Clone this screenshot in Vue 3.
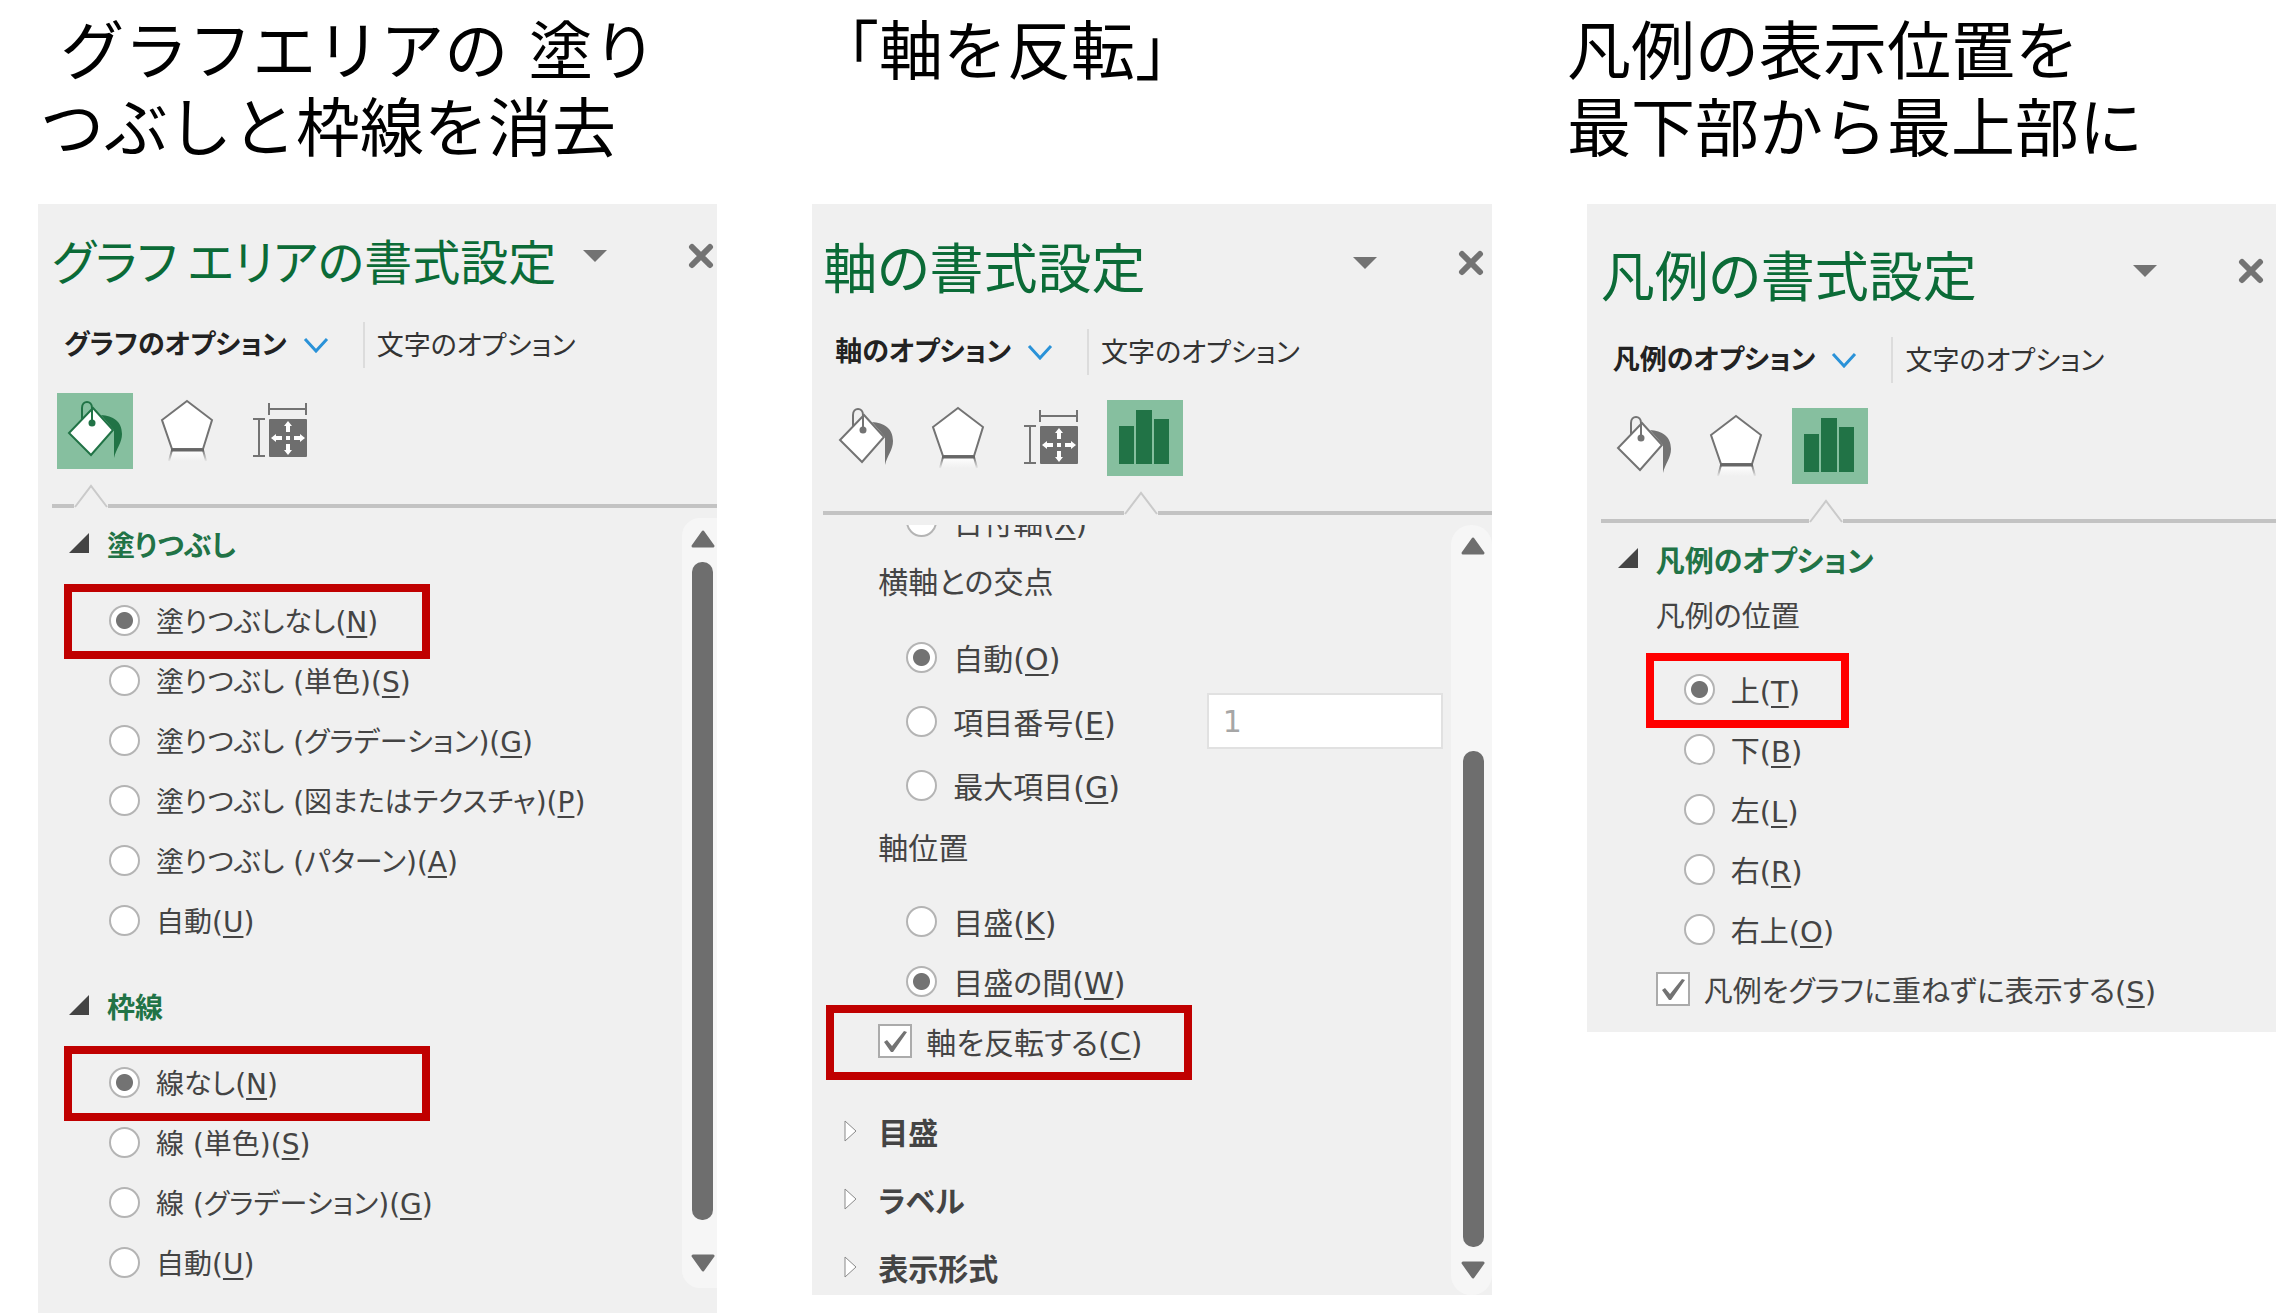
<template>
  <main class="page">
    <div class="captions">
      <p v-for="(caption, i) in captions" :key="i" class="caption">{{ caption }}</p>
    </div>

    <div class="panels">
      <section v-for="panel in panels" :key="panel.id" :class="['panel', `panel-${panel.id}`]">
        <header class="title-bar">
          <h2 class="title">{{ panel.title }}</h2>
          <div class="window-buttons">
            <button type="button" class="icon-button" aria-label="作業ウィンドウ オプション">
              <svg width="24" height="12" viewBox="0 0 24 12"><path d="M0 0H24L12 12Z" fill="#737373" /></svg>
            </button>
            <button type="button" class="icon-button" aria-label="閉じる">
              <svg width="26" height="26" viewBox="0 0 26 26">
                <path d="M4 4L22 22M22 4L4 22" stroke="#737373" stroke-width="6" stroke-linecap="round" />
              </svg>
            </button>
          </div>
        </header>

        <nav class="tabs">
          <button type="button" class="tab tab-current">
            {{ panel.tab }}
            <svg width="26" height="16" viewBox="0 0 26 16">
              <path d="M2 2L13 14L24 2" fill="none" stroke="#2a92d8" stroke-width="3" />
            </svg>
          </button>
          <button type="button" class="tab">文字のオプション</button>
        </nav>

        <div class="tiles">
          <button
            v-for="(icon, index) in panel.icons"
            :key="icon"
            type="button"
            :class="['tile', { active: index === panel.activeIcon }]"
            :aria-label="iconNames[icon]"
          >
            <svg v-if="icon === 'fill'" width="76" height="76" viewBox="0 0 76 76">
              <path d="M44 22C56 23 65 28 65 41C65 50 59 56 57 65V37Z" fill="currentColor" />
              <path d="M36 15L56 37L34 62L12 40Z" fill="#fff" stroke="currentColor" stroke-width="2" />
              <path d="M25 27V15C25 7 35 7 35 15V29" fill="none" stroke="currentColor" stroke-width="2" />
              <circle cx="35" cy="30" r="3.5" fill="currentColor" />
            </svg>
            <svg v-else-if="icon === 'effect'" width="76" height="76" viewBox="0 0 76 76">
              <defs>
                <linearGradient :id="`fade-${panel.id}`" x1="0" y1="0" x2="0" y2="1">
                  <stop offset="0" stop-color="#fff" />
                  <stop offset="1" stop-color="#f0f0f0" />
                </linearGradient>
                <linearGradient :id="`leg-${panel.id}`" gradientUnits="userSpaceOnUse" x1="0" y1="57" x2="0" y2="69">
                  <stop offset="0" stop-color="#737373" />
                  <stop offset="1" stop-color="#f0f0f0" />
                </linearGradient>
              </defs>
              <path d="M22 57H53L56 68H19Z" :fill="`url(#fade-${panel.id})`" />
              <path d="M22 57L19 68M53 57L56 68" :stroke="`url(#leg-${panel.id})`" stroke-width="2" />
              <path d="M37 8L62 27L53 56H22L12 27Z" fill="#fff" stroke="#737373" stroke-width="2" />
              <path d="M21 57H54" stroke="#666" stroke-width="3" />
            </svg>
            <svg v-else-if="icon === 'size'" width="76" height="76" viewBox="0 0 76 76">
              <path
                d="M26 16H63M26 10V22M63 10V22M16 26V63M10 26H22M10 63H22"
                stroke="#737373"
                stroke-width="2"
                fill="none"
              />
              <rect x="26" y="26" width="38" height="38" rx="1" fill="#6e6e6e" />
              <path
                d="M45 33V39M45 51V57M33 45H39M51 45H57"
                stroke="#fff"
                stroke-width="4"
              />
              <path
                d="M45 28L49 33H41ZM45 62L41 57H49ZM28 45L33 41V49ZM62 45L57 49V41ZM43 43H47V47H43Z"
                fill="#fff"
              />
            </svg>
            <svg v-else width="76" height="76" viewBox="0 0 76 76">
              <path d="M12 26H27V64H12ZM29 10H45V64H29ZM47 19H62V64H47Z" fill="currentColor" />
            </svg>
          </button>
        </div>

        <div class="pointer-line">
          <span class="line-start" :style="{ width: `${22 + panel.activeIcon * 93}px` }"></span>
          <svg width="34" height="24" viewBox="0 0 34 24">
            <path d="M1 23L17 2L33 23" fill="none" stroke="#cacaca" stroke-width="2" />
          </svg>
          <span class="line-end"></span>
        </div>

        <div class="body">
          <div class="options">
            <template v-for="(row, r) in panel.rows" :key="r">
              <h3 v-if="row.type === 'heading'" :class="['heading', { closed: row.closed }]">
                <button type="button" class="heading-button" :aria-expanded="!row.closed">
                  <svg v-if="row.closed" class="marker" width="20" height="24" viewBox="0 0 20 24">
                    <path d="M5 2L16 12L5 22Z" fill="#fff" stroke="#8a8a8a" stroke-width="1" />
                  </svg>
                  <svg v-else class="marker" width="20" height="24" viewBox="0 0 20 24">
                    <path d="M0 21L20 1V21Z" fill="#444" />
                  </svg>
                  {{ row.text }}
                </button>
              </h3>
              <p v-else-if="row.type === 'label'" class="label">{{ row.text }}</p>
              <div v-else :class="['row', row.type, { tall: row.tall, nested: panel.nested }]">
                <span class="control">
                  <input
                    v-if="row.type === 'radio'"
                    :id="`${panel.id}-${r}`"
                    v-model="selected[row.group]"
                    class="radio-input"
                    type="radio"
                    :name="row.group"
                    :value="row.key"
                  >
                  <template v-else>
                    <input :id="`${panel.id}-${r}`" v-model="checked[panel.id]" class="check-input" type="checkbox">
                    <svg v-if="checked[panel.id]" class="check-mark" width="34" height="34" viewBox="0 0 34 34">
                      <path d="M6 18L9 16L14 22L26 7L29 8L15 28H13Z" fill="#737373" />
                    </svg>
                  </template>
                </span>
                <label :for="`${panel.id}-${r}`">{{ row.text }}(<u>{{ row.key }}</u>)</label>
                <input
                  v-if="row.input"
                  v-model="itemNumber"
                  class="number-input"
                  type="text"
                  aria-label="項目番号"
                  disabled
                >
                <span v-if="row.mark" :class="['mark', row.mark]"></span>
              </div>
            </template>
          </div>

          <div v-if="panel.scrollbar" class="scrollbar">
            <button type="button" class="scroll-button" aria-label="上へスクロール">
              <svg width="24" height="18" viewBox="0 0 24 18">
                <path d="M12 2L22 16H2Z" fill="#6e6e6e" stroke="#6e6e6e" stroke-width="3" stroke-linejoin="round" />
              </svg>
            </button>
            <div class="scroll-track"><div class="scroll-thumb"></div></div>
            <button type="button" class="scroll-button" aria-label="下へスクロール">
              <svg width="24" height="18" viewBox="0 0 24 18">
                <path d="M12 16L22 2H2Z" fill="#6e6e6e" stroke="#6e6e6e" stroke-width="3" stroke-linejoin="round" />
              </svg>
            </button>
          </div>
        </div>
      </section>
    </div>
  </main>
</template>

<script setup>
import { reactive, ref } from 'vue'

const captions = [
  ' グラフエリアの 塗り\nつぶしと枠線を消去',
  '「軸を反転」',
  '凡例の表示位置を\n最下部から最上部に'
]

const iconNames = {
  fill: '塗りつぶしと線',
  effect: '効果',
  size: 'サイズとプロパティ',
  chart: 'オプション'
}

const radio = (group, text, key, extra = {}) => ({ type: 'radio', group, text, key, ...extra })

const panels = [
  {
    id: 'area',
    title: 'グラフ エリアの書式設定',
    tab: 'グラフのオプション',
    icons: ['fill', 'effect', 'size'],
    activeIcon: 0,
    scrollbar: true,
    rows: [
      { type: 'heading', text: '塗りつぶし' },
      radio('fill', '塗りつぶしなし', 'N', { mark: 'wide' }),
      radio('fill', '塗りつぶし (単色)', 'S'),
      radio('fill', '塗りつぶし (グラデーション)', 'G'),
      radio('fill', '塗りつぶし (図またはテクスチャ)', 'P'),
      radio('fill', '塗りつぶし (パターン)', 'A'),
      radio('fill', '自動', 'U'),
      { type: 'heading', text: '枠線' },
      radio('border', '線なし', 'N', { mark: 'wide' }),
      radio('border', '線 (単色)', 'S'),
      radio('border', '線 (グラデーション)', 'G'),
      radio('border', '自動', 'U')
    ]
  },
  {
    id: 'axis',
    title: '軸の書式設定',
    tab: '軸のオプション',
    icons: ['fill', 'effect', 'size', 'chart'],
    activeIcon: 3,
    scrollbar: true,
    nested: true,
    rows: [
      radio('axisType', '日付軸', 'X'),
      { type: 'label', text: '横軸との交点' },
      radio('cross', '自動', 'O', { tall: true }),
      radio('cross', '項目番号', 'E', { tall: true, input: true }),
      radio('cross', '最大項目', 'G', { tall: true }),
      { type: 'label', text: '軸位置' },
      radio('position', '目盛', 'K'),
      radio('position', '目盛の間', 'W'),
      { type: 'check', text: '軸を反転する', key: 'C', mark: 'wide' },
      { type: 'heading', text: '目盛', closed: true },
      { type: 'heading', text: 'ラベル', closed: true },
      { type: 'heading', text: '表示形式', closed: true }
    ]
  },
  {
    id: 'legend',
    title: '凡例の書式設定',
    tab: '凡例のオプション',
    icons: ['fill', 'effect', 'chart'],
    activeIcon: 2,
    nested: true,
    rows: [
      { type: 'heading', text: '凡例のオプション' },
      { type: 'label', text: '凡例の位置' },
      radio('legend', '上', 'T', { mark: 'narrow' }),
      radio('legend', '下', 'B'),
      radio('legend', '左', 'L'),
      radio('legend', '右', 'R'),
      radio('legend', '右上', 'O'),
      { type: 'check', text: '凡例をグラフに重ねずに表示する', key: 'S' }
    ]
  }
]

const selected = reactive({
  fill: 'N',
  border: 'N',
  axisType: '',
  cross: 'O',
  position: 'W',
  legend: 'T'
})
const checked = reactive({ axis: true, legend: true })
const itemNumber = ref('1')
</script>

<style>
body {
  margin: 0;
  background: #fff;
}
</style>

<style scoped>
* {
  box-sizing: border-box;
}

.page {
  font-family: "DejaVu Sans", "Noto Sans CJK JP", sans-serif;
  font-size: 30px;
  color: #444;
  overflow: hidden;
}

.captions {
  display: grid;
  grid-template-columns: 775fr 752fr 709fr;
  height: 204px;
  padding: 14px 0 0 40px;
}

.caption {
  margin: 0;
  font-size: 64px;
  line-height: 77px;
  color: #000;
  white-space: pre;
}

.panels {
  display: grid;
  grid-template-columns: 68fr 68fr 69fr;
  gap: 95px;
  align-items: start;
  padding-left: 38px;
}

.panel {
  min-width: 0;
  padding-left: 14px;
  background: #f0f0f0;
  font-feature-settings: "palt";
}

.panel-area {
  padding-top: 27px;
  padding-bottom: 25px;
}

.panel-axis {
  padding-top: 34px;
  padding-left: 11px;
}

.panel-legend {
  padding-top: 42px;
  padding-bottom: 13px;
}

button {
  padding: 0;
  border: none;
  background: none;
  font: inherit;
  font-feature-settings: inherit;
  color: inherit;
  cursor: pointer;
}

svg {
  display: block;
}

/* タイトル */
.title-bar {
  display: flex;
  justify-content: space-between;
  height: 60px;
  padding-right: 3px;
}

.panel-axis .title-bar {
  padding-right: 8px;
}

.panel-legend .title-bar {
  padding-right: 12px;
}

.title {
  min-width: 0;
  margin: 0;
  font-family: "Noto Sans CJK JP", sans-serif;
  font-size: 54px;
  font-weight: 400;
  line-height: 56px;
  color: #0b6b37;
  white-space: nowrap;
}

.panel-area .title {
  font-size: 48px;
}

.window-buttons {
  display: flex;
  flex: none;
  gap: 81px;
  align-items: center;
  height: 50px;
}

/* タブ */
.tabs {
  display: flex;
  height: 46px;
  margin-top: 31px;
  padding-left: 12px;
  font-size: 27px;
}

.tab {
  padding-left: 12px;
  color: #333;
  line-height: 48px;
  white-space: nowrap;
}

.tab-current {
  display: flex;
  gap: 16px;
  align-items: center;
  padding: 0 34px 0 0;
  border-right: 2px solid #dcdcdc;
  font-weight: 700;
  color: #222;
}

.tiles {
  display: flex;
  gap: 17px;
  margin-top: 25px;
  padding-left: 5px;
}

.tile {
  width: 76px;
  height: 76px;
  color: #737373;
}

.tile.active {
  background: #86bf9f;
  color: #217346;
}

.pointer-line {
  display: flex;
  align-items: flex-end;
  height: 24px;
  margin-top: 15px;
}

.line-start,
.line-end {
  height: 4px;
  background: #c3c3c3;
}

.line-end {
  flex: 1;
}

/* 本文 */
.body {
  display: flex;
  height: 770px;
  margin-top: 10px;
  overflow: hidden;
}

.panel-area .body {
  font-size: 28px;
}

.panel-legend .body {
  height: auto;
  font-size: 29px;
}

.options {
  flex: 1;
  min-width: 0;
}

.heading {
  margin: 0;
  font-size: inherit;
  font-weight: 700;
  color: #217346;
}

.heading-button {
  display: flex;
  gap: 18px;
  align-items: center;
  height: 52px;
  padding-left: 17px;
}

.row + .heading {
  margin-top: 30px;
}

.heading.closed {
  margin-top: 16px;
  color: #444;
}

.row + .heading.closed {
  margin-top: 34px;
}

.heading + .row {
  margin-top: 20px;
}

.label {
  height: 54px;
  margin: 4px 0 16px;
  padding-left: 55px;
  line-height: 56px;
}

.row {
  position: relative;
  display: flex;
  gap: 16px;
  align-items: center;
  height: 60px;
  padding-left: 57px;
  white-space: nowrap;
}

.row.nested {
  padding-left: 83px;
}

.row.tall {
  height: 64px;
}

.row.check {
  gap: 14px;
  padding-left: 55px;
}

.panel-axis .row:first-child {
  margin-top: -34px;
}

.row u {
  text-decoration-thickness: 2px;
  text-underline-offset: 4px;
}

.control {
  position: relative;
  display: flex;
  flex: none;
}

.radio-input {
  appearance: none;
  width: 31px;
  height: 31px;
  margin: 0;
  border: 2px solid #b4b4b4;
  border-radius: 50%;
  background: #fff;
}

.radio-input:checked {
  background: radial-gradient(circle, #737373 0 8px, #fff 9px);
}

.check-input {
  appearance: none;
  width: 34px;
  height: 34px;
  margin: 0;
  border: 2px solid #ababab;
  background: #fff;
}

.check-mark {
  position: absolute;
  inset: 0;
  pointer-events: none;
}

.number-input {
  width: 236px;
  height: 56px;
  margin-left: auto;
  margin-right: 8px;
  padding: 0 14px;
  border: 2px solid #e1e1e1;
  background: #fff;
  font: inherit;
  color: #a6a6a6;
}

/* 強調枠 */
.mark {
  position: absolute;
  top: -6px;
  height: 75px;
  border: 8px solid #c00000;
  pointer-events: none;
}

.mark.wide {
  left: 12px;
  width: 366px;
}

.check .mark.wide {
  left: 3px;
}

.mark.narrow {
  left: 45px;
  width: 203px;
  border-color: #f00;
}

/* スクロールバー */
.scrollbar {
  display: flex;
  flex: none;
  flex-direction: column;
  align-items: center;
  width: 35px;
  padding: 12px 0 16px 6px;
  border-radius: 18px 0 0 18px;
  background: #f6f6f6;
}

.panel-axis .scrollbar {
  width: 41px;
  padding-left: 4px;
  border-radius: 20px;
}

.scroll-track {
  display: flex;
  flex: 1;
  flex-direction: column;
  width: 21px;
  padding: 14px 0 34px;
}

.scroll-thumb {
  flex: 1;
  border-radius: 10px;
  background: #6e6e6e;
}

.panel-axis .scroll-track {
  padding: 196px 0 14px;
}
</style>
